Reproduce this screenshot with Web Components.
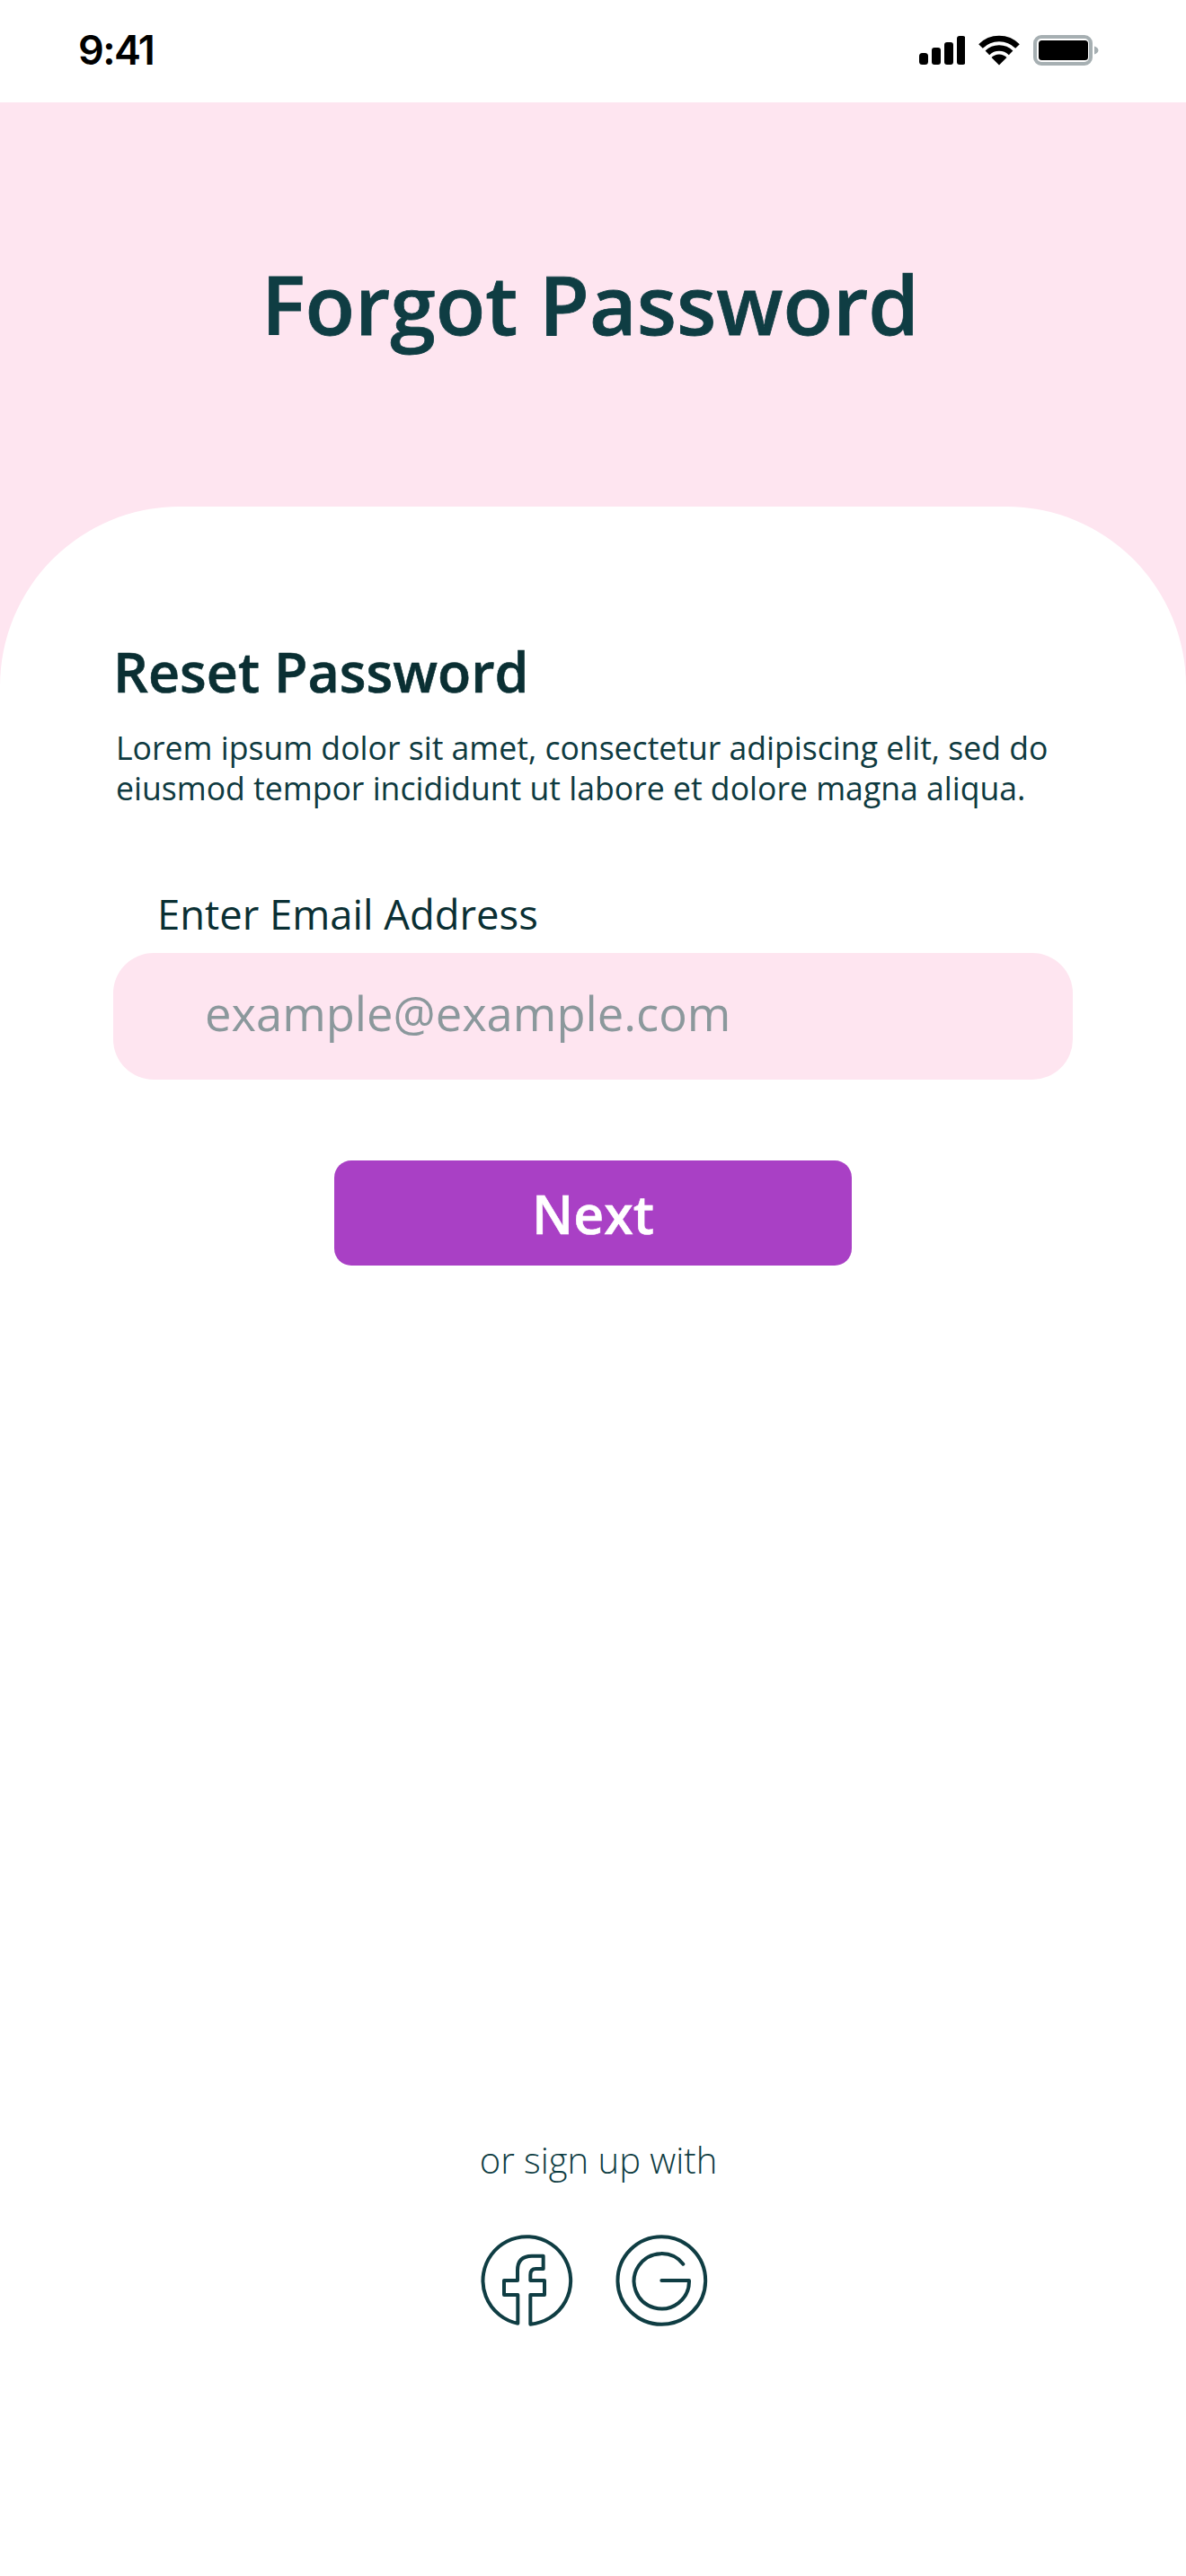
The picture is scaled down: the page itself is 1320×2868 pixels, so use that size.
<!doctype html>
<html lang="en"><head><meta charset="utf-8"><title>Forgot Password</title>
<style>
html,body{margin:0;padding:0;background:#fff}
body{font-family:"Open Sans","Liberation Sans",sans-serif;color:#0b3035}
</style></head>
<body>
<app-screen>
  <status-bar time="9:41"></status-bar>
  <auth-hero>Forgot Password</auth-hero>
  <reset-card>
    <span slot="title">Reset Password</span>
    <span slot="desc">Lorem ipsum dolor sit amet, consectetur adipiscing elit, sed do<br>eiusmod tempor incididunt ut labore et dolore magna aliqua.</span>
    <email-field label="Enter Email Address" placeholder="example@example.com"></email-field>
    <primary-button>Next</primary-button>
  </reset-card>
  <social-footer>or sign up with</social-footer>
</app-screen>
<script>
function def(name, html, init){
  customElements.define(name, class extends HTMLElement{
    constructor(){super();this.attachShadow({mode:"open"}).innerHTML=html;}
    connectedCallback(){if(init)init(this);}
  });
}
const F='"Open Sans","Liberation Sans",sans-serif';
def("app-screen",`<style>:host{display:flex;flex-direction:column;width:1320px;height:2868px;overflow:hidden;background:#fff}</style><slot></slot>`);
def("status-bar",`<style>
:host{display:flex;align-items:flex-start;justify-content:space-between;height:114px;box-sizing:border-box;padding:39px 97px 0 87px;background:#fff}
.t{font:600 45px/34px "Inter","Liberation Sans",sans-serif;letter-spacing:-1.6px;color:#000}
.i{display:flex;gap:15px;align-items:flex-start}svg{display:block}
</style><div class="t"></div><div class="i">
<svg width="51" height="33" viewBox="0 0 51 33"><g fill="#000"><rect x="0" y="20" width="10" height="13" rx="3.5"/><rect x="14" y="14" width="10" height="19" rx="3"/><rect x="28" y="8" width="10" height="25" rx="3"/><rect x="42" y="1" width="9.500" height="32" rx="3"/></g></svg>
<svg width="46" height="34" viewBox="0 0 46 34"><g fill="none" stroke="#000" stroke-width="6.500"><path d="M2.500 12.500A29 29 0 0 1 43.500 12.500"/><path d="M9.900 19.900A18.500 18.500 0 0 1 36.100 19.900"/></g><path fill="#000" d="M23 33.500L14.500 25A12 12 0 0 1 31.500 25Z"/></svg>
<svg width="73" height="34" viewBox="0 0 73 34"><rect x="2" y="2" width="62" height="30" rx="7" fill="none" stroke="#a6afb2" stroke-width="4"/><rect x="6" y="6" width="55" height="22" rx="3.500" fill="#000"/><path d="M68 12.500c2.500.6 4.500 2.300 4.500 4.500s-2 3.900-4.500 4.500z" fill="#a6afb2"/></svg>
</div>`,el=>{el.shadowRoot.querySelector(".t").textContent=el.getAttribute("time")});
def("auth-hero",`<style>
:host{display:block;height:450px;box-sizing:border-box;padding:174px 6px 0 0;background:#fee5f0;text-align:center;font:600 91px/100px ${F};color:#0f3d43;-webkit-text-stroke:.8px #0f3d43}
</style><slot></slot>`);
def("reset-card",`<style>
:host{display:block;background:linear-gradient(#fee5f0 200px,#fff 200px)}
.c{display:flex;flex-direction:column;background:#fff;border-radius:200px 200px 0 0;padding:148px 126px 0;height:1817px;box-sizing:border-box}
h1{margin:0;font:600 61px/72px ${F};color:#0a2f33;-webkit-text-stroke:.6px #0a2f33}
p{margin:26px 0 0 3px;font:400 35.6px/45px ${F};color:#0e3a40;white-space:nowrap}
</style><div class="c"><h1><slot name="title"></slot></h1><p><slot name="desc"></slot></p><slot></slot></div>`);
def("email-field",`<style>
:host{display:block;margin-top:89px}
label{display:block;margin-left:49px;font:500 45.4px/56px ${F};color:#0a2f33}
.b{display:flex;align-items:center;height:141px;margin-top:16px;box-sizing:border-box;padding:0 0 7px 102px;background:#fee5f0;border-radius:45px;font:400 52.5px/60px ${F};color:#8b989c}
</style><label></label><div class="b"></div>`,el=>{
  el.shadowRoot.querySelector("label").textContent=el.getAttribute("label");
  el.shadowRoot.querySelector(".b").textContent=el.getAttribute("placeholder");
});
def("primary-button",`<style>
:host{display:flex;align-items:center;justify-content:center;align-self:center;width:576px;height:117px;margin-top:90px;background:#a940c5;border-radius:19px;color:#fff;font:600 59px/70px ${F};-webkit-text-stroke:.5px #fff}
</style><slot></slot>`);
def("social-footer",`<style>
:host{display:flex;flex-direction:column;align-items:center;padding-left:12px}
.w{display:flex;flex-direction:column;align-items:flex-start}
.t{font:300 40px/48px ${F};color:#0f3d43}
.r{display:flex;gap:40px;margin:55px 0 0 -1.5px}svg{display:block}
</style><div class="w"><div class="t"><slot></slot></div><div class="r">
<svg width="110" height="110" viewBox="65 342 330 330"><g fill="none" stroke="#0f3d43" stroke-width="12" stroke-linejoin="round" stroke-linecap="round"><path d="M198 650.400A146.500 146.500 0 1 1 240 653V555H287V507H240V488Q240 468 258 468H283V425H245Q197 425 197 473V507H152V555H198Z"/></g></svg>
<svg width="110" height="110" viewBox="515 342 330 330"><g fill="none" stroke="#0f3d43" stroke-width="12" stroke-linecap="round" stroke-linejoin="round"><circle cx="678" cy="507" r="146.500"/><path d="M750 452A92 92 0 1 0 770 507H678"/></g></svg>
</div></div>`);
</script>
</body></html>
